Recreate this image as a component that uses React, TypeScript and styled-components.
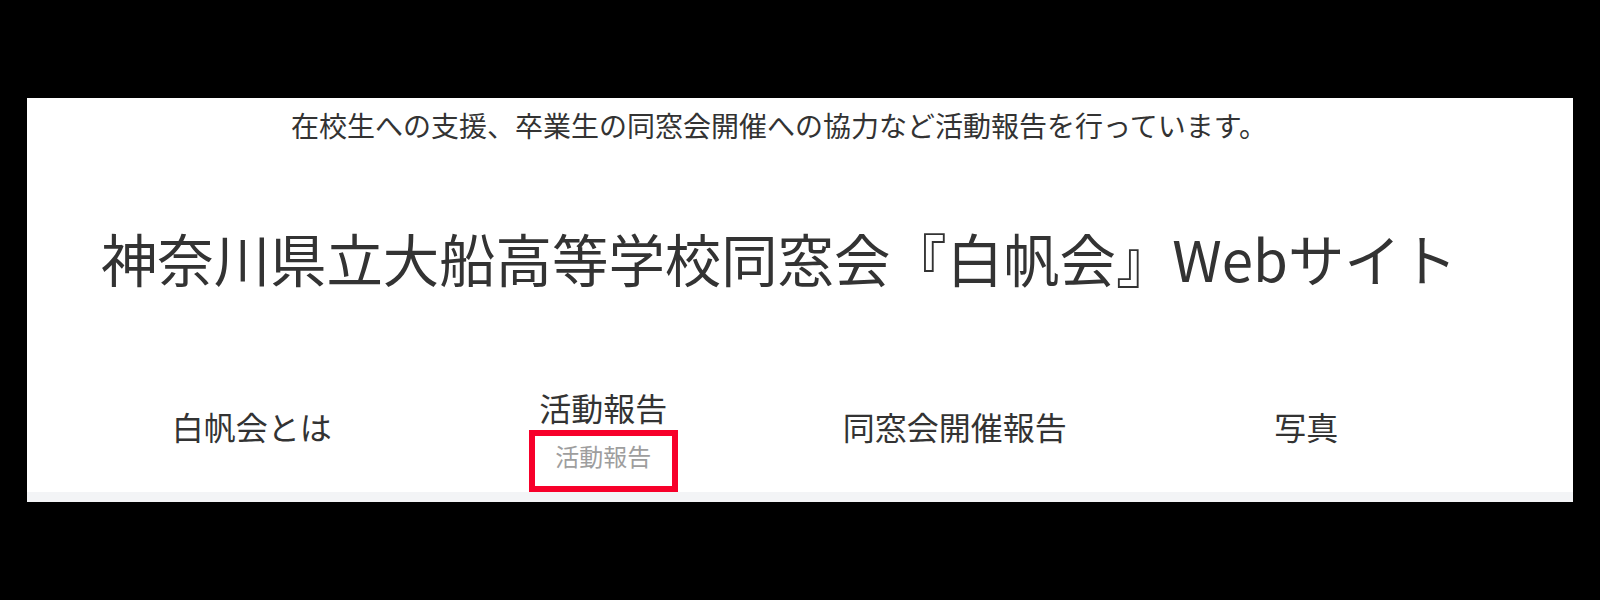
import styled, { createGlobalStyle } from 'styled-components';

const GlobalStyle = createGlobalStyle`
  html, body {
    margin: 0;
    padding: 0;
    background: #000;
  }
  body {
    font-family: "Noto Sans CJK JP", "Noto Sans", sans-serif;
    color: #333;
  }
`;

const navItems = [
  { label: '白帆会とは' },
  { label: '活動報告', sub: '活動報告' },
  { label: '同窓会開催報告' },
  { label: '写真' },
];

const App = () => {
  return (
    <>
      <GlobalStyle />
      <Panel>
        <Header>
          <Tagline>在校生への支援、卒業生の同窓会開催への協力など活動報告を行っています。</Tagline>
          <SiteTitle>神奈川県立大船高等学校同窓会『白帆会』Webサイト</SiteTitle>
          <Nav>
            {navItems.map((item) => (
              <NavItem key={item.label} $active={!!item.sub}>
                <NavLabel>{item.label}</NavLabel>
                {item.sub && <SubLabel>{item.sub}</SubLabel>}
              </NavItem>
            ))}
          </Nav>
        </Header>
        <BottomStrip />
      </Panel>
    </>
  );
};

export default App;

const Panel = styled.div`
  margin: 98px 0 0 27px;
  width: 1546px;
  height: 404px;
  background: #fff;
  display: flex;
  flex-direction: column;
`;

const Header = styled.header`
  padding: 6px 42px 0 0;
  display: flex;
  flex-direction: column;
  align-items: center;
`;

const Tagline = styled.p`
  margin: 0;
  font-size: 28px;
  line-height: 42px;
  color: #333;
`;

const SiteTitle = styled.h1`
  margin: 76px 0 0;
  font-size: 56.4px;
  line-height: 72px;
  font-weight: 400;
  color: #333;
  white-space: nowrap;
`;

const Nav = styled.nav`
  margin-top: 91px;
  display: grid;
  grid-template-columns: repeat(4, 351.5px);
  height: 107px;
`;

const NavItem = styled.div<{ $active: boolean }>`
  display: flex;
  flex-direction: column;
  align-items: center;
  padding-top: ${(p) => (p.$active ? '0' : '19px')};
`;

const NavLabel = styled.span`
  font-size: 32px;
  line-height: 44px;
  color: #333;
  white-space: nowrap;
`;

const SubLabel = styled.span`
  position: relative;
  z-index: 1;
  box-sizing: border-box;
  margin-top: 1px;
  width: 149px;
  height: 62px;
  padding-top: 2px;
  border: 6px solid #f7002a;
  background: #fff;
  font-size: 24px;
  line-height: 36px;
  text-align: center;
  color: #9e9e9e;
`;

const BottomStrip = styled.div`
  margin-top: auto;
  height: 12px;
  background: #f3f4f6;
`;
